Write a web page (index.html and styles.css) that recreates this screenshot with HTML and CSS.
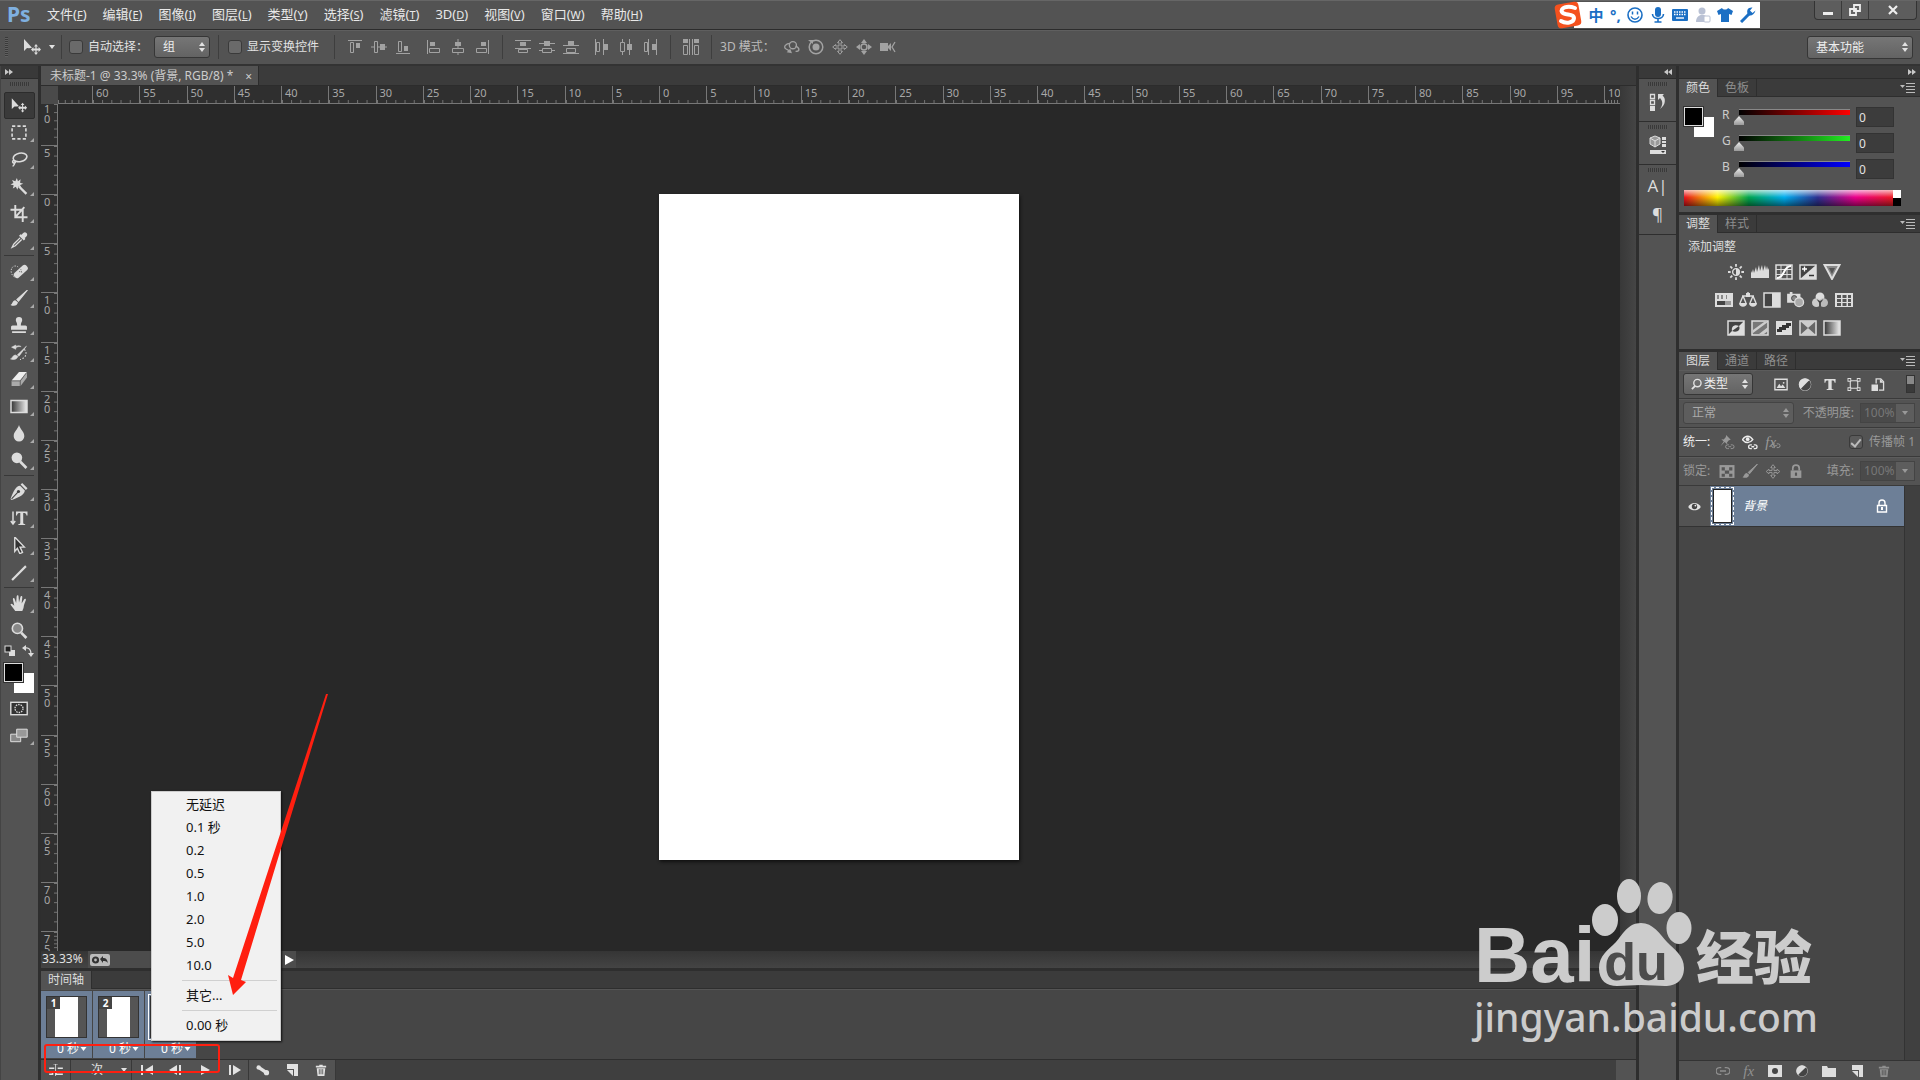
FILE: index.html
```html
<!DOCTYPE html>
<html lang="zh-CN">
<head>
    <meta charset="UTF-8">
    <meta name="viewport" content="width=device-width, initial-scale=1.0">
    <title>未标题-1 @ 33.3%</title>
    <link rel="stylesheet" href="styles.css">
</head>
<body>
    <svg class="sprite" aria-hidden="true">
        <!-- tools -->
        <symbol id="i-move" viewBox="0 0 20 16"><path d="M2 0v12l3-3 2 .2 3-.4z" fill="currentColor"/><path d="M14 5l2 2.400h-1.400v2h2V8L19 10.500l-2.400 2.400v-1.400h-2v2H16l-2 2.400-2-2.400h1.400v-2h-2v1.400L9 10.500 11.400 8v1.400h2v-2H12z" fill="currentColor"/></symbol>
        <symbol id="i-marquee" viewBox="0 0 16 16"><rect x="1.500" y="2" width="13" height="12" fill="none" stroke="currentColor" stroke-width="1.500" stroke-dasharray="3 2"/></symbol>
        <symbol id="i-lasso" viewBox="0 0 16 16"><g fill="none" stroke="currentColor" stroke-width="1.500"><ellipse cx="9" cy="6" rx="6.500" ry="4" transform="rotate(-12 9 6)"/><path d="M3.500 8.500c-2 .5-2 3 0 2.800s1-2.800-.5-1.800M4 11c-.3 2-1 3-2 3.500"/></g></symbol>
        <symbol id="i-wand" viewBox="0 0 16 16"><path d="M6 0l1 3 2.500-1.800L9 4.500l3 .8-3 1.400 1.300 2.600L7.500 8 6.500 11 5 8.200 2.200 9.800 3 6.800 0 6l2.800-1.400L1.500 1.800 4.600 3z" fill="currentColor"/><path d="M8 8l7 7" stroke="currentColor" stroke-width="2.200"/></symbol>
        <symbol id="i-crop" viewBox="0 0 16 16"><path d="M4.500 0v11.500H13M0 4.500h11.500V16M13 11.500h3M5 11l8-9" fill="none" stroke="currentColor" stroke-width="1.800"/></symbol>
        <symbol id="i-dropper" viewBox="0 0 16 16"><path d="M15 1c1.500 1.500.5 3-1.500 4.500l.5 1-1.500 1.500L8 3.500 9.500 2l1 .5C12 .5 13.500-.5 15 1z" fill="currentColor"/><path d="M9 5.500L3 11.500l-1.500 3L4.500 13l6-6" fill="none" stroke="currentColor" stroke-width="1.200"/></symbol>
        <symbol id="i-heal" viewBox="0 0 20 16"><rect x="3" y="4.500" width="18" height="7" rx="3" fill="currentColor" transform="rotate(-42 12 8)"/><path d="M10 8l4 1M12 5.500l1 4" stroke="#666" stroke-dasharray="1 1"/><path d="M5 14C1 12 0 6 3 3c2-2 5-1 6 0" fill="none" stroke="currentColor" stroke-dasharray="1.500 1.500"/></symbol>
        <symbol id="i-brush" viewBox="0 0 16 16"><path d="M16 0L7.500 10.500 6 9z" fill="currentColor" stroke="currentColor"/><path d="M7 11.500C6.500 15 3 15.500 0 14c2-.5 1.500-4 4.500-4.300z" fill="currentColor"/></symbol>
        <symbol id="i-stamp" viewBox="0 0 16 16"><path d="M8 0a3 3 0 013 3c0 1.500-1.300 2-1.300 5H14c1 0 1.500.7 1.500 1.500V12H.5V9.500C.5 8.700 1 8 2 8h4.300c0-3-1.300-3.500-1.300-5a3 3 0 013-3zM1.500 13.500h13V15h-13z" fill="currentColor"/></symbol>
        <symbol id="i-history" viewBox="0 0 16 16"><path d="M15 2L8 11.500l-1.500-1.300zM7 11.500C6 15 3 15 0 14c2-.5 1.500-3 4.500-3.700zM1 3l4-2v1.300c2-1 4-.8 5 .2-2-.3-3.500 0-5 1V5z" fill="currentColor" stroke="currentColor" stroke-width=".5"/><path d="M13 5c3 3 2 8-4 9.500" fill="none" stroke="currentColor" stroke-dasharray="1.500 1.500"/></symbol>
        <symbol id="i-eraser" viewBox="0 0 16 16"><path d="M8 1h7.500L9 9H1z" fill="#eee"/><path d="M1 9.500h8V14H1zM9.500 9.500l6-8V6l-6 8z" fill="#aaa"/><path d="M1 9.500h8l6-8M9 9.500V14" fill="none" stroke="#666" stroke-width=".6"/></symbol>
        <symbol id="i-gradient" viewBox="0 0 18 14"><defs><linearGradient id="gr"><stop stop-color="#333"/><stop offset="1" stop-color="#eee"/></linearGradient></defs><rect x="1" y="1" width="16" height="12" fill="url(#gr)" stroke="#ddd" stroke-width="1.500"/></symbol>
        <symbol id="i-drop" viewBox="0 0 16 16"><path d="M8 0c1 4 5 6 5 10.500a5 5 0 01-10 0C3 6 7 4 8 0z" fill="currentColor"/></symbol>
        <symbol id="i-dodge" viewBox="0 0 16 16"><circle cx="6" cy="5.500" r="5" fill="currentColor"/><path d="M9 9l6 6" stroke="currentColor" stroke-width="2.500"/></symbol>
        <symbol id="i-pen" viewBox="0 0 16 16"><path d="M11 0l5 5-1.500 1.500-5-5zM9 2.500L13.500 7C13 11 9 13 1 16L0 15C3 7 5 3 9 2.500z" fill="currentColor"/><path d="M1 15l6-6.500" stroke="#444"/><circle cx="7.500" cy="8" r="1.500" fill="#444"/></symbol>
        <symbol id="i-vtype" viewBox="0 0 18 16"><path d="M3 1v12M.8 10.500L3 13.500l2.200-3" fill="none" stroke="currentColor" stroke-width="1.500"/><path d="M6 1h11.500v4h-1c-.3-2-1-2.500-3.300-2.500V12c0 1.300.4 1.500 2 1.700v.8H8.300v-.8c1.600-.2 2-.4 2-1.700V2.500C8 2.500 7.300 3 7 5H6z" fill="currentColor"/></symbol>
        <symbol id="i-arrow" viewBox="0 0 16 16"><path d="M4 0l9 9.500H9l2.300 5-2.500 1.200-2.300-5L4 13.500z" fill="#333" stroke="currentColor" stroke-width="1.300"/></symbol>
        <symbol id="i-line" viewBox="0 0 16 16"><path d="M1.500 15L14.500 2" stroke="currentColor" stroke-width="2"/></symbol>
        <symbol id="i-hand" viewBox="0 0 18 18"><path d="M5 17c-1-2-4-5-5-7 .5-1.500 2-1 4 1.500L2.500 4.500c0-1.600 1.700-1.600 2 0L6 8.500 6.500 1.500c.2-1.500 2-1.500 2 0L9 8l1.500-6c.4-1.500 2.200-1.100 2 .5L11.800 9l2.700-4.500c.8-1.200 2.300-.4 1.700 1-1 2.500-2 5-2.200 7-.2 2-1 3-1.500 4.500z" fill="currentColor"/></symbol>
        <symbol id="i-zoom" viewBox="0 0 16 16"><circle cx="6.500" cy="6" r="4.800" fill="#888" stroke="currentColor" stroke-width="1.500"/><path d="M10 10l5 5" stroke="currentColor" stroke-width="2.500"/></symbol>
        <symbol id="i-default" viewBox="0 0 12 12"><rect x="5" y="5" width="6" height="6" fill="#ddd"/><rect x="1" y="1" width="6" height="6" fill="#222" stroke="#ddd"/></symbol>
        <symbol id="i-swap" viewBox="0 0 12 12"><path d="M3 3c4-1 6 2 6 6" fill="none" stroke="currentColor" stroke-width="1.300"/><path d="M0 3l4-3v6zM6 8h6l-3 4z" fill="currentColor"/></symbol>
        <symbol id="i-mask" viewBox="0 0 18 14"><rect x=".8" y=".8" width="16.400" height="12.400" fill="#333" stroke="currentColor" stroke-width="1.400"/><circle cx="9" cy="7" r="4" fill="none" stroke="currentColor" stroke-width="1.300" stroke-dasharray="1.500 1"/></symbol>
        <symbol id="i-screen" viewBox="0 0 18 14"><path d="M.7 5.700h10v7.500H.7z" fill="#888" stroke="#ddd"/><path d="M6.700.7h10.500v8H6.700z" fill="#999" stroke="#ddd"/></symbol>
        <!-- align and distribute -->
        <symbol id="i-al-t" viewBox="0 0 16 16"><path d="M1 1.500h14M3.500 3.500h3v10h-3z" fill="none" stroke="currentColor"/><path d="M9 4h4v5H9z" fill="currentColor"/></symbol>
        <symbol id="i-al-m" viewBox="0 0 16 16"><path d="M0 8h3M7 8h3M14 8h2M3.500 2.500h3v11h-3z" fill="none" stroke="currentColor"/><path d="M9 5h5v6H9z" fill="currentColor"/></symbol>
        <symbol id="i-al-b" viewBox="0 0 16 16"><path d="M1 14.500h14M3.500 2.500h3v10h-3z" fill="none" stroke="currentColor"/><path d="M9 7h4v5H9z" fill="currentColor"/></symbol>
        <symbol id="i-al-l" viewBox="0 0 16 16"><path d="M1.500 1v14M3.500 9.500h10v4h-10z" fill="none" stroke="currentColor"/><path d="M4 3h5v4H4z" fill="currentColor"/></symbol>
        <symbol id="i-al-c" viewBox="0 0 16 16"><path d="M8 0v3M8 7v2M8 13v3M2.500 9.500h11v4h-11z" fill="none" stroke="currentColor"/><path d="M5 3h6v4H5z" fill="currentColor"/></symbol>
        <symbol id="i-al-r" viewBox="0 0 16 16"><path d="M14.500 1v14M2.500 9.500h10v4h-10z" fill="none" stroke="currentColor"/><path d="M7 3h5v4H7z" fill="currentColor"/></symbol>
        <symbol id="i-ds-t" viewBox="0 0 16 16"><path d="M0 1.500h16M0 9.500h16M3.500 10.500h9v3h-9z" fill="none" stroke="currentColor"/><path d="M5 3h6v4H5z" fill="currentColor"/></symbol>
        <symbol id="i-ds-m" viewBox="0 0 16 16"><path d="M0 4.500h16M0 11.500h3M13 11.500h3M3.500 9.500h9v4h-9z" fill="none" stroke="currentColor"/><path d="M5 2h6v5H5z" fill="currentColor"/></symbol>
        <symbol id="i-ds-b" viewBox="0 0 16 16"><path d="M0 6.500h16M0 14.500h16M3.500 9.500h9v4h-9z" fill="none" stroke="currentColor"/><path d="M5 2h6v4H5z" fill="currentColor"/></symbol>
        <symbol id="i-ds-l" viewBox="0 0 16 16"><path d="M1.500 0v16M9.500 0v16M2.500 3.500h3v9h-3z" fill="none" stroke="currentColor"/><path d="M10 5h4v6h-4z" fill="currentColor"/></symbol>
        <symbol id="i-ds-c" viewBox="0 0 16 16"><path d="M4.500 0v3M4.500 13v3M11.500 0v16M2.500 3.500h4v9h-4z" fill="none" stroke="currentColor"/><path d="M9 5h5v6H9z" fill="currentColor"/></symbol>
        <symbol id="i-ds-r" viewBox="0 0 16 16"><path d="M6.500 0v16M14.500 0v16M2.500 3.500h3v9h-3z" fill="none" stroke="currentColor"/><path d="M10 5h4v6h-4z" fill="currentColor"/></symbol>
        <symbol id="i-gap" viewBox="0 0 16 16"><path d="M0 0h5v4H0zM11 0h5v4h-5z" fill="currentColor"/><path d="M6.500 0v16M9.500 0v16M.5 6.500h4v9h-4zM11.500 6.500h4v9h-4z" fill="none" stroke="currentColor"/></symbol>
        <!-- 3d modes -->
        <symbol id="i-3d-orbit" viewBox="0 0 18 16"><circle cx="10" cy="6" r="4" fill="none" stroke="currentColor" stroke-width="1.500"/><path d="M7 4C2 4-1 8 2 10l5 3M13 7c5 2 5 6 0 6" fill="none" stroke="currentColor" stroke-width="1.500"/><path d="M3 14l6 1-2-5z" fill="currentColor"/></symbol>
        <symbol id="i-3d-roll" viewBox="0 0 16 16"><circle cx="8" cy="8" r="3.500" fill="currentColor"/><circle cx="8" cy="8" r="6.800" fill="none" stroke="currentColor" stroke-width="1.500"/><path d="M0 1h5v4z" fill="currentColor"/></symbol>
        <symbol id="i-3d-pan" viewBox="0 0 16 16"><path d="M8 .7l2.500 3H9V7h3.300V5.500l3 2.500-3 2.500V9H9v3.300h1.500l-2.500 3-2.500-3H7V9H3.700v1.500L.7 8l3-2.500V7H7V3.700H5.500z" fill="none" stroke="currentColor"/></symbol>
        <symbol id="i-3d-slide" viewBox="0 0 16 16"><circle cx="8" cy="8" r="3" fill="none" stroke="currentColor" stroke-width="1.500"/><path d="M5 4l3-4 3 4zM5 12l3 4 3-4zM4 5L0 8l4 3zM12 5l4 3-4 3z" fill="currentColor"/></symbol>
        <symbol id="i-3d-cam" viewBox="0 0 16 16"><path d="M0 4h8v3l3-3v8L8 9v3H0z" fill="currentColor"/><path d="M15 3l-3 5 3 5" fill="none" stroke="currentColor" stroke-width="1.300"/></symbol>
        <!-- dock -->
        <symbol id="i-dock-hist" viewBox="0 0 18 20"><path d="M1.500 2.500h4v4h-4zM1.500 8.500h4v4h-4z" fill="none" stroke="currentColor" stroke-width="1.300"/><path d="M1 14h5v5H1z" fill="currentColor"/><path d="M9 2h6l-1.500 1.500C17 6 17 13 11 17c3-4 3-8 0-11L9 8z" fill="currentColor"/></symbol>
        <symbol id="i-dock-prop" viewBox="0 0 18 20"><path d="M6 1l5 2v6l-5 3-5-3V3z" fill="#999" stroke="currentColor"/><path d="M1 3l5 3 5-3M6 6v6" fill="none" stroke="currentColor"/><path d="M13 2h4v3h-4zM13 6h4v2h-4zM13 9h4v3h-4zM1 15h16v4H1z" fill="currentColor"/><path d="M12 16h4l-2 2z" fill="#333"/></symbol>
        <symbol id="i-menu" viewBox="0 0 16 12"><path d="M0 3h5L2.500 6z" fill="currentColor"/><path d="M6 1.500h9M6 4.500h9M6 7.500h9M6 10.500h9" stroke="currentColor"/></symbol>
        <symbol id="i-updown" viewBox="0 0 6 10"><path d="M0 4l3-4 3 4zM0 6h6l-3 4z" fill="currentColor"/></symbol>
        <symbol id="i-down" viewBox="0 0 6 4"><path d="M0 0h6L3 4z" fill="currentColor"/></symbol>
        <symbol id="i-dbl-r" viewBox="0 0 8 6"><path d="M0 0l4 3-4 3zM4 0l4 3-4 3z" fill="currentColor"/></symbol>
        <symbol id="i-dbl-l" viewBox="0 0 8 6"><path d="M4 0L0 3l4 3zM8 0L4 3l4 3z" fill="currentColor"/></symbol>
        <!-- adjustments -->
        <symbol id="i-sun" viewBox="0 0 18 18"><circle cx="9" cy="9" r="3.800" fill="none" stroke="currentColor" stroke-width="1.500"/><path d="M9 5v8a4 4 0 000-8z" fill="currentColor"/><path d="M9 0v3M9 15v3M0 9h3M15 9h3M2.600 2.600l2.200 2.200M13.200 13.200l2.200 2.200M2.600 15.400l2.200-2.200M13.200 4.800l2.200-2.200" stroke="currentColor" stroke-width="2"/></symbol>
        <symbol id="i-levels" viewBox="0 0 18 16"><path d="M0 14V7l1 2 1-4 1 4 2-6 1 5 2-7 1 6 2-6 1 6 2-6 1 5 1-4 1 4 1-2v10z" fill="currentColor"/></symbol>
        <symbol id="i-curves" viewBox="0 0 18 16"><path d="M1 1h16v14H1z" fill="#555" stroke="currentColor" stroke-width="1.500"/><path d="M1 5.500h16M1 10.500h16M6 1v14M12 1v14" stroke="currentColor"/><path d="M2 14c8 0 6-12 14-12" fill="none" stroke="#fff" stroke-width="2"/></symbol>
        <symbol id="i-exposure" viewBox="0 0 18 16"><path d="M1 1h16v14H1z" fill="#444" stroke="currentColor" stroke-width="1.500"/><path d="M17 1v14H1z" fill="currentColor"/><path d="M3 5h5M5.500 2.500v5" stroke="#fff" stroke-width="1.300"/><path d="M10 11.500h5" stroke="#333" stroke-width="1.500"/></symbol>
        <symbol id="i-vibrance" viewBox="0 0 18 16"><path d="M1.500 1h15L9 15z" fill="#888" stroke="currentColor" stroke-width="2"/><path d="M6 4h6L9 10z" fill="#555"/></symbol>
        <symbol id="i-hue" viewBox="0 0 18 16"><path d="M0 1h18v14H0z" fill="currentColor"/><path d="M2 3h2v4H2zM6 3h2v4H6zM11 3h1v4h-1z" fill="#888"/><path d="M2 9h8v4H2z" fill="#444"/><path d="M10 9h6v4h-6z" fill="#999"/></symbol>
        <symbol id="i-scale" viewBox="0 0 18 16"><path d="M9 0v4M3 4h12M4 4L1 11M4 4l3 7M14 4l-3 7M14 4l3 7" fill="none" stroke="currentColor" stroke-width="1.400"/><path d="M0 11h8c0 5-8 5-8 0zM10 11h8c0 5-8 5-8 0zM7 1h4v4H7z" fill="currentColor"/></symbol>
        <symbol id="i-bw" viewBox="0 0 18 16"><path d="M1 1h16v14H1z" fill="#444" stroke="currentColor" stroke-width="1.500"/><path d="M9 1h8v14H9z" fill="currentColor"/></symbol>
        <symbol id="i-photo" viewBox="0 0 20 18"><path d="M0 2h3V0h3v2h9v10H0z" fill="currentColor"/><circle cx="8" cy="7" r="3" fill="#888" stroke="#444"/><circle cx="13.500" cy="11.500" r="5" fill="#aaa" stroke="#ddd" stroke-width="1.500"/></symbol>
        <symbol id="i-mixer" viewBox="0 0 18 18"><circle cx="9" cy="5.500" r="5" fill="#ddd"/><circle cx="5" cy="12" r="5" fill="#ccc"/><circle cx="13" cy="12" r="5" fill="#bbb"/><path d="M5 8l4 2 4-2-3 4v4H8v-4z" fill="#444"/></symbol>
        <symbol id="i-lookup" viewBox="0 0 18 16"><path d="M0 1h18v14H0z" fill="currentColor"/><path d="M2 3h4v3H2zM7.500 3h4v3h-4zM13 3h3v3h-3zM2 7h4v3H2zM7.500 7h4v3h-4zM13 7h3v3h-3zM2 11h4v3H2zM7.500 11h4v3h-4zM13 11h3v3h-3z" fill="#555"/></symbol>
        <symbol id="i-invert" viewBox="0 0 18 16"><path d="M1 1h16v14H1z" fill="#444" stroke="currentColor" stroke-width="1.500"/><path d="M17 1v14H1l4-4c-1-5 3-7 7-5z" fill="currentColor"/><path d="M12 6c2 4-2 7-7 5z" fill="#444"/></symbol>
        <symbol id="i-poster" viewBox="0 0 18 16"><path d="M1 1h16v14H1z" fill="#777" stroke="currentColor" stroke-width="1.500"/><path d="M2 10L13 2h4L2 13zM8 14l9-7v4l-4 3z" fill="#ccc"/></symbol>
        <symbol id="i-thresh" viewBox="0 0 18 16"><path d="M1 1h16v14H1z" fill="currentColor"/><path d="M2 9h2V7h3V5h4V3h5v3h-2v2h-3v2H7v2H2z" fill="#333"/></symbol>
        <symbol id="i-selective" viewBox="0 0 18 16"><path d="M1 1h16v14H1z" fill="#666" stroke="currentColor" stroke-width="1.500"/><path d="M1 1h16L9 8zM1 15h16L9 8z" fill="#ccc"/></symbol>
        <symbol id="i-gmap" viewBox="0 0 18 16"><path d="M1 1h16v14H1z" fill="url(#gr)" stroke="currentColor" stroke-width="1.500"/></symbol>
        <!-- layers -->
        <symbol id="i-search" viewBox="0 0 12 12"><circle cx="7" cy="5" r="4" fill="none" stroke="currentColor" stroke-width="1.500"/><path d="M4.500 8L1 11.500" stroke="currentColor" stroke-width="2"/></symbol>
        <symbol id="i-image" viewBox="0 0 16 14"><path d="M1 1h14v12H1z" fill="none" stroke="currentColor" stroke-width="1.500"/><path d="M3 11l3-5 2 3 2-2 3 4z" fill="currentColor"/><circle cx="11" cy="5" r="1" fill="currentColor"/></symbol>
        <symbol id="i-adjust" viewBox="0 0 14 14"><circle cx="7" cy="7" r="6" fill="#555" stroke="currentColor" stroke-width="1.500"/><path d="M11.500 2.500a6.300 6.300 0 01-9 9z" fill="#444"/><path d="M11.500 2.500a6.300 6.300 0 00-9 9z" fill="currentColor"/></symbol>
        <symbol id="i-type" viewBox="0 0 14 14"><path d="M1 1h12v4h-1c-.3-2-1-2.300-3.200-2.300V11c0 1 .5 1.200 2 1.300v.7H3.200v-.7c1.500-.1 2-.3 2-1.300V2.700C3 2.700 2.300 3 2 5H1z" fill="currentColor"/></symbol>
        <symbol id="i-shape" viewBox="0 0 14 14"><path d="M3 3h8v8H3z" fill="none" stroke="currentColor" stroke-width="1.200"/><path d="M0 0h4v4H0zM10 0h4v4h-4zM0 10h4v4H0zM10 10h4v4h-4z" fill="currentColor"/><path d="M1 1h2v2H1zM11 1h2v2h-2zM1 11h2v2H1zM11 11h2v2h-2z" fill="#555"/></symbol>
        <symbol id="i-smart" viewBox="0 0 14 14"><path d="M5 6V1h5l3 3v9H8" fill="none" stroke="currentColor" stroke-width="1.400"/><path d="M0 7h7v7H0zM9 1v4h4z" fill="currentColor"/></symbol>
        <symbol id="i-pin" viewBox="0 0 16 16"><path d="M7 0l5 5-2 .5-2 2.500.5 2-3-2.500L1 12l3.500-5L2 4.500l2.500.3L6.800 2z" fill="currentColor"/><path d="M10 10.500H8.500a2 2 0 000 4H10M12 10.500h1.500a2 2 0 010 4H12M9.500 12.500h3" fill="none" stroke="currentColor"/></symbol>
        <symbol id="i-eyelink" viewBox="0 0 16 16"><path d="M0 5c3-5 8-5 11 0-3 4-8 4-11 0z" fill="none" stroke="currentColor" stroke-width="1.500"/><circle cx="5.500" cy="4.500" r="2" fill="currentColor"/><path d="M10 10.500H8.500a2 2 0 000 4H10M12 10.500h1.500a2 2 0 010 4H12M9.500 12.500h3" fill="none" stroke="currentColor" stroke-width="1.400"/></symbol>
        <symbol id="i-fxlink" viewBox="0 0 16 16"><path d="M10 10.500H8.500a2 2 0 000 4H10M12 10.500h1.500a2 2 0 010 4H12M9.500 12.500h3" fill="none" stroke="currentColor"/></symbol>
        <symbol id="i-link" viewBox="0 0 16 14"><path d="M6 3H4a4 4 0 000 8h2M10 3h2a4 4 0 010 8h-2M4.500 7h7" fill="none" stroke="currentColor" stroke-width="1.500"/></symbol>
        <symbol id="i-check" viewBox="0 0 14 14"><path d="M0 1h14v12H0z" fill="currentColor"/><path d="M2 3h3v3H2zM9 3h3v3H9zM5 6h4v3H5zM2 9h3v3H2zM9 9h3v3H9z" fill="#555"/></symbol>
        <symbol id="i-padlock" viewBox="0 0 12 14"><path d="M3 6V4a3 3 0 016 0v2" fill="none" stroke="currentColor" stroke-width="1.600"/><path d="M1 6h10v7H1z" fill="currentColor"/><path d="M5 8h2v3H5z" fill="#555"/></symbol>
        <symbol id="i-padlock-o" viewBox="0 0 12 14"><path d="M3 6V4a3 3 0 016 0v2M1.500 6.500h9v6.500h-9z" fill="none" stroke="currentColor" stroke-width="1.400"/><path d="M5 8h2v3H5z" fill="currentColor"/></symbol>
        <symbol id="i-eye" viewBox="0 0 14 10"><path d="M0 5.500C3-.5 11-.5 14 5.500 11 10.500 3 10.500 0 5.500z" fill="currentColor"/><circle cx="7" cy="5" r="3" fill="#444"/><circle cx="8" cy="4" r="1" fill="#eee"/></symbol>
        <symbol id="i-addmask" viewBox="0 0 14 12"><path d="M0 0h14v12H0z" fill="currentColor"/><circle cx="7" cy="6" r="3" fill="#444"/></symbol>
        <symbol id="i-folder" viewBox="0 0 14 12"><path d="M0 1h5l1 2h8v9H0z" fill="currentColor"/></symbol>
        <symbol id="i-new" viewBox="0 0 12 12"><path d="M1 0h11v12H8V5H1z" fill="currentColor"/><path d="M1 6h6v6z" fill="currentColor"/></symbol>
        <symbol id="i-trash" viewBox="0 0 12 14"><path d="M4 1h4v1h4v2H0V2h4zM1 5h10l-1 9H2z" fill="currentColor"/><path d="M4 6v6M6 6v6M8 6v6" stroke="#555"/></symbol>
        <!-- timeline -->
        <symbol id="i-convert" viewBox="0 0 16 14"><path d="M0 5h6M10 5h6M0 9h4v3H0M16 9H8v3h8" fill="none" stroke="currentColor" stroke-width="1.800"/><path d="M5 0h5M7.500 0v14" stroke="currentColor"/></symbol>
        <symbol id="i-first" viewBox="0 0 14 12"><path d="M2 1v10" stroke="currentColor" stroke-width="2"/><path d="M13 1v10L5 6z" fill="currentColor"/></symbol>
        <symbol id="i-prev" viewBox="0 0 14 12"><path d="M8 1v10L0 6z" fill="currentColor"/><path d="M11 1v10" stroke="currentColor" stroke-width="2"/></symbol>
        <symbol id="i-play" viewBox="0 0 12 12"><path d="M2 1v10l9-5z" fill="currentColor"/></symbol>
        <symbol id="i-next" viewBox="0 0 14 12"><path d="M6 1v10l8-5z" fill="currentColor"/><path d="M3 1v10" stroke="currentColor" stroke-width="2"/></symbol>
        <symbol id="i-tween" viewBox="0 0 16 12"><circle cx="3" cy="3" r="2.500" fill="currentColor"/><path d="M3 3l9 6" stroke="currentColor" stroke-width="4"/><circle cx="12" cy="9" r="3" fill="currentColor"/></symbol>
        <symbol id="i-sync" viewBox="0 0 20 12"><rect width="20" height="12" rx="2" fill="#bbb"/><circle cx="5.500" cy="6" r="2.500" fill="none" stroke="#333" stroke-width="2.200"/><path d="M10 5l3-3v2c3 0 4 1 5 5-2-2-3-2-5-2v2z" fill="#333"/></symbol>
        <!-- input method bar -->
        <symbol id="i-smile" viewBox="0 0 16 16"><circle cx="8" cy="8" r="7" fill="none" stroke="currentColor" stroke-width="1.600"/><path d="M5.500 4.500v3M10.500 4.500v3M4 9.500c2 3.500 6 3.500 8 0" fill="none" stroke="currentColor" stroke-width="1.500"/></symbol>
        <symbol id="i-mic" viewBox="0 0 16 16"><rect x="5" y="0" width="6" height="10" rx="3" fill="currentColor"/><path d="M2.500 7c0 6 11 6 11 0M8 12v3M4.500 15h7" fill="none" stroke="currentColor" stroke-width="1.600"/></symbol>
        <symbol id="i-keys" viewBox="0 0 16 12"><rect width="16" height="12" rx="1" fill="currentColor"/><path d="M2 3h12M2 5.500h12" stroke="#fff" stroke-width="1.400" stroke-dasharray="1.500 1"/><path d="M4 9h8" stroke="#fff" stroke-width="1.400"/></symbol>
        <symbol id="i-user" viewBox="0 0 16 16"><circle cx="7" cy="4" r="3.500" fill="currentColor"/><path d="M1 15c0-9 11-9 11-3v3z" fill="currentColor"/><rect x="9" y="9" width="6" height="6" rx="1" fill="#fff" stroke="currentColor"/></symbol>
        <symbol id="i-shirt" viewBox="0 0 16 16"><path d="M5 1c1 2 5 2 6 0l5 3-1.500 4L12 7v8H4V7L1.500 8 0 4z" fill="currentColor"/></symbol>
        <symbol id="i-wrench" viewBox="0 0 16 16"><path d="M1 15L10 6" stroke="currentColor" stroke-width="3"/><path d="M15.500 3.500L12.500 6 10 3.500 12.500.5C8 0 6.500 3 7.500 6.500S14 9 15.500 3.500z" fill="currentColor"/></symbol>
    </svg>

    <header class="menubar">
        <span class="logo">Ps</span>
        <nav class="menus">
            <a href="#">文件(<u>F</u>)</a>
            <a href="#">编辑(<u>E</u>)</a>
            <a href="#">图像(<u>I</u>)</a>
            <a href="#">图层(<u>L</u>)</a>
            <a href="#">类型(<u>Y</u>)</a>
            <a href="#">选择(<u>S</u>)</a>
            <a href="#">滤镜(<u>T</u>)</a>
            <a href="#">3D(<u>D</u>)</a>
            <a href="#">视图(<u>V</u>)</a>
            <a href="#">窗口(<u>W</u>)</a>
            <a href="#">帮助(<u>H</u>)</a>
        </nav>
        <div class="ime">
            <svg class="ime-logo" viewBox="0 0 28 28"><rect x="2" y="2" width="24" height="24" rx="4" fill="#f4511e" transform="rotate(-10 14 14)"/><path d="M21 7C13 4 6 7 8 11s12 1 12 6-8 6-13 3" fill="none" stroke="#fff" stroke-width="4" stroke-linecap="round"/></svg>
            <span class="ime-lang">中</span>
            <span class="ime-punct">°,</span>
            <svg class="ic16"><use href="#i-smile"/></svg>
            <svg class="ic16"><use href="#i-mic"/></svg>
            <svg class="ic16"><use href="#i-keys"/></svg>
            <svg class="ic16 pale"><use href="#i-user"/></svg>
            <svg class="ic16"><use href="#i-shirt"/></svg>
            <svg class="ic16"><use href="#i-wrench"/></svg>
        </div>
        <div class="winbtns">
            <button type="button" aria-label="最小化"><svg viewBox="0 0 12 12"><path d="M1 8h10v3H1z" fill="#eee"/></svg></button>
            <button type="button" aria-label="还原"><svg viewBox="0 0 12 12"><path d="M5 1h6v6H5zM1 5h6v6H1z" fill="#666" stroke="#eee" stroke-width="1.800"/></svg></button>
            <button type="button" class="wide" aria-label="关闭"><svg viewBox="0 0 12 12"><path d="M2 2l8 8M10 2l-8 8" stroke="#eee" stroke-width="2.200"/></svg></button>
        </div>
    </header>

    <div class="options">
        <span class="grip-v"></span>
        <svg class="ic-move"><use href="#i-move"/></svg>
        <svg class="ic-caret"><use href="#i-down"/></svg>
        <span class="sep"></span>
        <label class="check"><input type="checkbox">自动选择：</label>
        <span class="drop drop-group"><select aria-label="选择对象"><option>组</option><option>图层</option></select><svg><use href="#i-updown"/></svg></span>
        <span class="sep"></span>
        <label class="check wide-check"><input type="checkbox">显示变换控件</label>
        <span class="sep tight"></span>
        <div class="icons"><svg><use href="#i-al-t"/></svg><svg><use href="#i-al-m"/></svg><svg><use href="#i-al-b"/></svg></div>
        <div class="icons"><svg><use href="#i-al-l"/></svg><svg><use href="#i-al-c"/></svg><svg><use href="#i-al-r"/></svg></div>
        <span class="sep tight"></span>
        <div class="icons"><svg><use href="#i-ds-t"/></svg><svg><use href="#i-ds-m"/></svg><svg><use href="#i-ds-b"/></svg></div>
        <div class="icons"><svg><use href="#i-ds-l"/></svg><svg><use href="#i-ds-c"/></svg><svg><use href="#i-ds-r"/></svg></div>
        <span class="sep tight"></span>
        <div class="icons"><svg><use href="#i-gap"/></svg></div>
        <span class="sep tight"></span>
        <span class="mode-label">3D 模式：</span>
        <div class="icons"><svg><use href="#i-3d-orbit"/></svg><svg><use href="#i-3d-roll"/></svg><svg><use href="#i-3d-pan"/></svg><svg><use href="#i-3d-slide"/></svg><svg><use href="#i-3d-cam"/></svg></div>
        <span class="drop drop-work"><select aria-label="工作区"><option>基本功能</option></select><svg><use href="#i-updown"/></svg></span>
    </div>

    <main class="workspace">
        <aside class="toolbox">
            <div class="strip"><svg><use href="#i-dbl-r"/></svg></div>
            <div class="grip"></div>
            <div class="tools">
                <button type="button" class="tool active" aria-label="移动"><svg><use href="#i-move"/></svg></button>
                <button type="button" class="tool more" aria-label="选框"><svg><use href="#i-marquee"/></svg></button>
                <button type="button" class="tool more" aria-label="套索"><svg><use href="#i-lasso"/></svg></button>
                <button type="button" class="tool more" aria-label="魔棒"><svg><use href="#i-wand"/></svg></button>
                <button type="button" class="tool more" aria-label="裁剪"><svg><use href="#i-crop"/></svg></button>
                <button type="button" class="tool more" aria-label="吸管"><svg><use href="#i-dropper"/></svg></button>
                <hr>
                <button type="button" class="tool more" aria-label="修复画笔"><svg><use href="#i-heal"/></svg></button>
                <button type="button" class="tool more" aria-label="画笔"><svg><use href="#i-brush"/></svg></button>
                <button type="button" class="tool more" aria-label="图章"><svg><use href="#i-stamp"/></svg></button>
                <button type="button" class="tool more" aria-label="历史画笔"><svg><use href="#i-history"/></svg></button>
                <button type="button" class="tool more" aria-label="橡皮擦"><svg><use href="#i-eraser"/></svg></button>
                <button type="button" class="tool more" aria-label="渐变"><svg><use href="#i-gradient"/></svg></button>
                <button type="button" class="tool more" aria-label="模糊"><svg><use href="#i-drop"/></svg></button>
                <button type="button" class="tool more" aria-label="减淡"><svg><use href="#i-dodge"/></svg></button>
                <hr>
                <button type="button" class="tool more" aria-label="钢笔"><svg><use href="#i-pen"/></svg></button>
                <button type="button" class="tool more" aria-label="直排文字"><svg><use href="#i-vtype"/></svg></button>
                <button type="button" class="tool more" aria-label="路径选择"><svg><use href="#i-arrow"/></svg></button>
                <button type="button" class="tool more" aria-label="直线"><svg><use href="#i-line"/></svg></button>
                <hr>
                <button type="button" class="tool more" aria-label="抓手"><svg><use href="#i-hand"/></svg></button>
                <button type="button" class="tool" aria-label="缩放"><svg><use href="#i-zoom"/></svg></button>
                <div class="mini"><svg><use href="#i-default"/></svg><svg><use href="#i-swap"/></svg></div>
                <div class="swatches"><span class="bg"></span><span class="fg"></span></div>
                <button type="button" class="tool" aria-label="快速蒙版"><svg><use href="#i-mask"/></svg></button>
                <button type="button" class="tool more" aria-label="屏幕模式"><svg><use href="#i-screen"/></svg></button>
            </div>
        </aside>

        <section class="document">
            <div class="doc-tabs"><div class="doc-tab">未标题-1 @ 33.3% (背景, RGB/8) *<button type="button" aria-label="关闭标签">×</button></div></div>
            <div class="view">
                <div class="corner"></div>
                <div class="ruler ruler-h" id="rulerH"></div>
                <div class="ruler ruler-v" id="rulerV"></div>
                <div class="canvas"><div class="artboard"></div></div>
                <div class="scroll-v"></div>
            </div>
            <div class="status">
                <span class="zoomlevel">33.33%</span>
                <div class="docinfo"><svg class="sync"><use href="#i-sync"/></svg><svg class="go"><use href="#i-play"/></svg></div>
            </div>
            <div class="timeline">
                <div class="tabs"><span class="tab on">时间轴</span><svg class="tabmenu"><use href="#i-menu"/></svg></div>
                <div class="frames">
                    <div class="frame"><div class="thumb"><b>1</b></div><button type="button">0 秒<svg><use href="#i-down"/></svg></button></div>
                    <div class="frame"><div class="thumb"><b>2</b></div><button type="button">0 秒<svg><use href="#i-down"/></svg></button></div>
                    <div class="frame current"><div class="thumb"><b>3</b></div><button type="button">0 秒<svg><use href="#i-down"/></svg></button></div>
                </div>
                <div class="playbar">
                    <div class="seg seg-a"><svg><use href="#i-convert"/></svg></div>
                    <div class="seg seg-b"><span>次</span><svg class="ic-caret"><use href="#i-down"/></svg></div>
                    <div class="seg seg-c"><svg><use href="#i-first"/></svg><svg><use href="#i-prev"/></svg><svg><use href="#i-play"/></svg><svg><use href="#i-next"/></svg></div>
                    <div class="seg seg-d"><svg><use href="#i-tween"/></svg><svg><use href="#i-new"/></svg><svg><use href="#i-trash"/></svg></div>
                    <div class="endcap"></div>
                </div>
            </div>
        </section>

        <aside class="dock">
            <div class="strip"><svg><use href="#i-dbl-l"/></svg></div>
            <div class="dock-group"><div class="grip"></div><svg><use href="#i-dock-hist"/></svg></div>
            <div class="dock-group"><div class="grip"></div><svg><use href="#i-dock-prop"/></svg></div>
            <div class="dock-group tall"><div class="grip"></div><span class="char">A|</span><span class="para">¶</span></div>
            <div class="dock-rest"></div>
        </aside>

        <aside class="panels">
            <div class="strip"><svg><use href="#i-dbl-r"/></svg></div>
            <section class="panel">
                <div class="tabs"><span class="tab on">颜色</span><span class="tab">色板</span><svg class="tabmenu"><use href="#i-menu"/></svg></div>
                <div class="color-body">
                    <div class="swatches"><span class="bg"></span><span class="fg"></span></div>
                    <div class="channels">
                        <div class="channel red"><label for="chR">R</label><input type="range" id="chR" min="0" max="255" value="0"><input type="text" value="0" aria-label="R 值"></div>
                        <div class="channel green"><label for="chG">G</label><input type="range" id="chG" min="0" max="255" value="0"><input type="text" value="0" aria-label="G 值"></div>
                        <div class="channel blue"><label for="chB">B</label><input type="range" id="chB" min="0" max="255" value="0"><input type="text" value="0" aria-label="B 值"></div>
                    </div>
                    <div class="spectrum"><span class="ramp"></span><span class="bw"></span></div>
                </div>
            </section>
            <section class="panel">
                <div class="tabs"><span class="tab on">调整</span><span class="tab">样式</span><svg class="tabmenu"><use href="#i-menu"/></svg></div>
                <div class="adjust-body">
                    <p>添加调整</p>
                    <div class="adj"><svg><use href="#i-sun"/></svg><svg><use href="#i-levels"/></svg><svg><use href="#i-curves"/></svg><svg><use href="#i-exposure"/></svg><svg><use href="#i-vibrance"/></svg></div>
                    <div class="adj"><svg><use href="#i-hue"/></svg><svg><use href="#i-scale"/></svg><svg><use href="#i-bw"/></svg><svg><use href="#i-photo"/></svg><svg><use href="#i-mixer"/></svg><svg><use href="#i-lookup"/></svg></div>
                    <div class="adj"><svg><use href="#i-invert"/></svg><svg><use href="#i-poster"/></svg><svg><use href="#i-thresh"/></svg><svg><use href="#i-selective"/></svg><svg><use href="#i-gmap"/></svg></div>
                </div>
            </section>
            <section class="panel layers">
                <div class="tabs"><span class="tab on">图层</span><span class="tab">通道</span><span class="tab">路径</span><svg class="tabmenu"><use href="#i-menu"/></svg></div>
                <div class="lrow filter">
                    <span class="drop drop-kind"><svg class="lens"><use href="#i-search"/></svg><select aria-label="滤镜类型"><option>类型</option></select><svg><use href="#i-updown"/></svg></span>
                    <div class="kinds"><svg><use href="#i-image"/></svg><svg><use href="#i-adjust"/></svg><svg><use href="#i-type"/></svg><svg><use href="#i-shape"/></svg><svg><use href="#i-smart"/></svg></div>
                    <span class="switch"></span>
                </div>
                <div class="lrow dim">
                    <span class="drop drop-blend"><select aria-label="混合模式"><option>正常</option></select><svg><use href="#i-updown"/></svg></span>
                    <label class="push" for="opacity">不透明度:</label>
                    <span class="percent"><input type="text" id="opacity" value="100%"><button type="button" aria-label="不透明度滑块"><svg><use href="#i-down"/></svg></button></span>
                </div>
                <div class="lrow dim">
                    <span class="bright">统一:</span>
                    <div class="locks"><svg><use href="#i-pin"/></svg><svg class="bright"><use href="#i-eyelink"/></svg><span class="fx"><i>fx</i><svg><use href="#i-fxlink"/></svg></span></div>
                    <label class="check push"><input type="checkbox" checked>传播帧 1</label>
                </div>
                <div class="lrow dim">
                    <span>锁定:</span>
                    <div class="locks"><svg><use href="#i-check"/></svg><svg><use href="#i-brush"/></svg><svg><use href="#i-3d-pan"/></svg><svg><use href="#i-padlock"/></svg></div>
                    <label class="push" for="fill">填充:</label>
                    <span class="percent"><input type="text" id="fill" value="100%"><button type="button" aria-label="填充滑块"><svg><use href="#i-down"/></svg></button></span>
                </div>
                <div class="layer-list">
                    <div class="layer-items">
                        <div class="layer">
                            <div class="eye"><svg><use href="#i-eye"/></svg></div>
                            <div class="layer-main"><span class="lthumb"></span><em>背景</em><svg><use href="#i-padlock-o"/></svg></div>
                        </div>
                    </div>
                    <div class="layer-scroll"></div>
                </div>
                <div class="layer-foot">
                    <svg class="off"><use href="#i-link"/></svg><i class="off">fx</i><svg><use href="#i-addmask"/></svg><svg><use href="#i-adjust"/></svg><svg><use href="#i-folder"/></svg><svg><use href="#i-new"/></svg><svg class="off"><use href="#i-trash"/></svg>
                </div>
            </section>
        </aside>
    </main>

    <!-- delay menu opened from the third frame -->
    <ul class="popup">
        <li>无延迟</li>
        <li>0.1 秒</li>
        <li>0.2</li>
        <li>0.5</li>
        <li>1.0</li>
        <li>2.0</li>
        <li>5.0</li>
        <li>10.0</li>
        <li class="ruled">其它...</li>
        <li class="ruled">0.00 秒</li>
    </ul>
    <div class="redbox"></div>
    <svg class="redarrow" viewBox="0 0 110 304"><path d="M101 0h2L16 286l5 2L8 301 3 281l5 3z" fill="#ff1f10"/></svg>

    <div class="watermark">
        <div class="wm-top">
            <span class="wm-bai">Bai</span>
            <div class="wm-paw">
                <svg viewBox="0 0 100 110"><g fill="#ccc"><ellipse cx="13" cy="42" rx="13" ry="16"/><ellipse cx="37" cy="18" rx="12" ry="17"/><ellipse cx="68" cy="20" rx="12.500" ry="16" transform="rotate(8 68 20)"/><ellipse cx="87" cy="50" rx="12.500" ry="16"/><path d="M49 45c12 0 19 11 26 19 8 8 17 14 17 26 0 13-9 18-19 18-8 0-15-1-24-1s-16 1-24 1c-10 0-18-5-18-18 0-12 9-18 17-26 7-8 12-19 25-19z"/></g></svg>
                <span>du</span>
            </div>
            <span class="wm-cn">经验</span>
        </div>
        <div class="wm-url">jingyan.baidu.com</div>
    </div>

    <script>
        // ruler marks: part cell, then one cell for every 5 units, then part cell
        function buildRuler(id, from, to, head) {
            const ruler = document.getElementById(id);
            let html = '<span class="part">' + head + '</span>';
            for (let n = from; n < to; n += 5) {
                html += '<span>' + Math.abs(n) + '</span>';
            }
            html += '<span class="part last">' + to + '</span>';
            ruler.innerHTML = html;
        }

        buildRuler('rulerH', -60, 100, '');
        buildRuler('rulerV', -5, 75, '10');
    </script>
</body>
</html>
```
FILE: styles.css
```css
* {
    box-sizing: border-box;
}

body {
    margin: 0;
    height: 100vh;
    display: flex;
    flex-direction: column;
    overflow: hidden;
    position: relative;
    background: #2e2e2e;
    color: #e2e2e2;
    font-family: "Noto Sans", "Noto Sans CJK SC", sans-serif;
    font-size: 13px;
    line-height: 16px;
}

button, input, select {
    font: inherit;
    color: inherit;
}

button {
    border: 0;
    padding: 0;
    background: none;
}

.sprite {
    position: absolute;
    width: 0;
    height: 0;
}

.ic16 {
    width: 16px;
    height: 16px;
}

/* menu bar */
.menubar {
    height: 30px;
    display: flex;
    align-items: center;
    background: #535353;
    border-top: 1px solid #666;
    border-bottom: 1px solid #2c2c2c;
}

.logo {
    width: 47px;
    padding: 0 0 2px 7px;
    color: #7fb0e0;
    font-size: 21px;
    font-weight: bold;
}

.menus {
    display: flex;
    gap: 16px;
    flex: 1;
    padding-bottom: 2px;
}

.menus a {
    color: #e8e8e8;
    text-decoration: none;
    white-space: nowrap;
    font-size: 13px;
}

.menus u {
    font-size: 11px;
}

.ime {
    height: 26px;
    width: 206px;
    margin-right: 54px;
    padding-right: 4px;
    display: flex;
    align-items: center;
    justify-content: space-between;
    background: linear-gradient(90deg, transparent 20px, #fff 20px);
    color: #1b6fc4;
}

.ime-logo {
    width: 28px;
    height: 28px;
}

.ime-lang, .ime-punct {
    font-size: 15px;
    font-weight: bold;
}

.pale {
    color: #b9c1d4;
}

.winbtns {
    display: flex;
    align-self: flex-start;
    height: 19px;
    margin-right: 3px;
    border: 1px solid #333;
    border-top: 0;
    border-radius: 0 0 4px 4px;
    background: #5d5d5d;
}

.winbtns button {
    width: 27px;
    border-right: 1px solid #3a3a3a;
}

.winbtns .wide {
    width: 47px;
    border-right: 0;
}

.winbtns svg {
    width: 12px;
    height: 12px;
    display: block;
    margin: auto;
}

/* options bar */
.options {
    height: 36px;
    display: flex;
    align-items: center;
    background: #535353;
    border-top: 1px solid #5f5f5f;
    border-bottom: 2px solid #333;
    padding: 0 7px 1px 5px;
}

.grip-v {
    width: 3px;
    height: 20px;
    margin-right: 14px;
    background: repeating-linear-gradient(#3a3a3a 0 1px, #606060 1px 2px);
}

.ic-move {
    width: 20px;
    height: 16px;
    color: #ddd;
}

.ic-caret {
    width: 6px;
    height: 4px;
    margin: 0 6px 0 7px;
}

.sep {
    width: 1px;
    height: 24px;
    margin: 0 9px 0 8px;
    background: #3e3e3e;
}

.options .ic-caret + .sep {
    margin: 0 7px 0 0;
}

.options .tight {
    margin: 0;
}

.check {
    display: flex;
    align-items: center;
    gap: 5px;
    white-space: nowrap;
    font-size: 12px;
}

.wide-check {
    margin-right: 15px;
}

.check input {
    appearance: none;
    width: 14px;
    height: 14px;
    margin: 0;
    border: 1px solid #3a3a3a;
    border-radius: 3px;
    background: #6a6a6a;
}

.drop {
    position: relative;
    display: inline-flex;
    height: 22px;
}

.drop select {
    appearance: none;
    width: 100%;
    padding: 0 8px;
    border: 1px solid #363636;
    border-radius: 3px;
    background: linear-gradient(#767676, #636363);
    color: #eee;
    font-size: 12px;
}

.drop svg {
    position: absolute;
    right: 5px;
    top: 6px;
    width: 6px;
    height: 10px;
    pointer-events: none;
}

.drop-group {
    width: 56px;
    margin-left: 6px;
}

.drop-work {
    width: 106px;
    margin-left: auto;
}

.drop-work select {
    height: 23px;
}

.icons {
    display: flex;
    gap: 8px;
    margin: 0 12px;
    color: #a2a2a2;
}

.icons svg {
    width: 16px;
    height: 16px;
}

.icons + .icons {
    margin-left: 3px;
}

.mode-label {
    width: 52px;
    margin-left: 8px;
    color: #bbb;
    font-size: 12px;
    white-space: nowrap;
}

/* workspace */
.workspace {
    flex: 1;
    min-height: 0;
    display: grid;
    grid-template-columns: 38px minmax(0, 1fr) 37px 241px;
    gap: 3px;
    background: #2e2e2e;
}

.strip {
    height: 13px;
    flex: none;
    background: #393939;
    border-bottom: 1px solid #2c2c2c;
    display: flex;
    align-items: center;
    padding: 0 4px;
    color: #c8c8c8;
}

.strip svg {
    width: 8px;
    height: 6px;
}

.dock .strip, .panels .strip {
    justify-content: flex-end;
}

.grip {
    width: 20px;
    height: 4px;
    margin: 3px auto 0;
    background: repeating-linear-gradient(90deg, #393939 0 1px, #555 1px 2px);
}

.toolbox {
    background: #535353;
    border-left: 1px solid #444;
    color: #dcdcdc;
}

.tools {
    margin-top: 6px;
    padding-right: 1px;
    display: flex;
    flex-direction: column;
    align-items: center;
}

.tools hr {
    width: 30px;
    height: 1px;
    margin: 1px 0 2px;
    border: 0;
    background: #383838;
}

.tool {
    position: relative;
    width: 31px;
    height: 27px;
    display: flex;
    align-items: center;
    justify-content: center;
}

.tool svg {
    width: 18px;
    height: 17px;
}

.tool.active {
    background: #3a3a3a;
    border: 1px solid #2c2c2c;
    border-radius: 2px;
}

.tool.more::after {
    content: "";
    position: absolute;
    right: 1px;
    bottom: 4px;
    border-left: 4px solid transparent;
    border-bottom: 4px solid #aaa;
}

.mini {
    display: flex;
    gap: 6px;
    margin-top: 1px;
}

.mini svg {
    width: 12px;
    height: 12px;
}

.swatches {
    width: 30px;
    height: 31px;
    display: grid;
    grid-template: repeat(30, 1px) / repeat(30, 1px);
}

.swatches .fg {
    grid-area: 1 / 1 / 20 / 20;
    background: #000;
    border: 1px solid #ddd;
    outline: 1px solid #333;
}

.swatches .bg {
    grid-area: 11 / 11 / 31 / 31;
    background: #fff;
}

.tools .swatches {
    margin: 6px 0 1px;
}

/* document */
.document {
    display: flex;
    flex-direction: column;
    min-height: 0;
}

.doc-tabs {
    height: 20px;
    flex: none;
    display: flex;
    background: #3b3b3b;
    border-bottom: 1px solid #2c2c2c;
}

.doc-tab {
    width: 218px;
    padding: 2px 6px 0 9px;
    display: flex;
    justify-content: space-between;
    background: #535353;
    border-right: 1px solid #2c2c2c;
    color: #ccc;
    font-size: 12px;
    white-space: nowrap;
}

.view {
    flex: 1;
    min-height: 0;
    display: grid;
    grid-template: 18px minmax(0, 1fr) / 17px minmax(0, 1fr) 16px;
    background: #2f2f2f;
}

.corner {
    background: #4a4a4a;
}

.ruler {
    display: flex;
    overflow: hidden;
    color: #a8a8a8;
    font-size: 11px;
    line-height: 12px;
}

.ruler span {
    flex: 1 1 0;
    min-width: 0;
    min-height: 0;
    overflow: hidden;
}

.ruler-h {
    border-bottom: 1px solid #777;
}

.ruler-h span {
    padding: 1px 0 0 3px;
    border-left: 1px solid #777;
    background: linear-gradient(90deg, #777 1px, transparent 1px) left bottom / 20% 3px repeat-x;
}

.ruler-h .part {
    flex: 0 0 34px;
    border-left: 0;
}

.ruler-h .last {
    flex-basis: 16px;
    border-left: 1px solid #777;
}

.ruler-v {
    flex-direction: column;
    border-right: 1px solid #777;
}

.ruler-v span {
    padding: 2px 8px 0 3px;
    border-top: 1px solid #777;
    word-break: break-all;
    line-height: 10px;
    background: linear-gradient(#777 1px, transparent 1px) right top / 3px 20% repeat-y;
}

.ruler-v .part {
    flex: 0 0 41px;
    padding-top: 0;
    border-top: 0;
}

.ruler-v .last {
    flex-basis: 20px;
    padding-top: 2px;
    border-top: 1px solid #777;
}

.canvas {
    grid-area: 2 / 2;
    display: flex;
    align-items: center;
    justify-content: center;
    padding-bottom: 2px;
    background: #282828;
}

.artboard {
    width: 360px;
    height: 666px;
    background: #fff;
    box-shadow: 1px 2px 3px #111;
}

.scroll-v {
    grid-area: 1 / 3 / 3 / 4;
    background: linear-gradient(90deg, #383838, #454545);
}

.status {
    height: 17px;
    flex: none;
    display: flex;
    background: linear-gradient(#353535, #444);
}

.zoomlevel {
    width: 47px;
    padding-left: 1px;
    font-size: 12px;
}

.docinfo {
    width: 208px;
    padding: 0 1px 0 2px;
    display: flex;
    align-items: center;
    justify-content: space-between;
    background: #4c4c4c;
    color: #fff;
}

.sync {
    width: 20px;
    height: 12px;
}

.go {
    width: 12px;
    height: 12px;
}

/* timeline */
.timeline {
    height: 112px;
    flex: none;
    display: flex;
    flex-direction: column;
    border-top: 3px solid #2e2e2e;
    background: #464646;
}

.tabs {
    height: 18px;
    flex: none;
    display: flex;
    background: #3b3b3b;
    border-bottom: 1px solid #2e2e2e;
}

.tab {
    padding: 0 7px;
    border-right: 1px solid #2e2e2e;
    color: #8e8e8e;
    font-size: 12px;
    line-height: 17px;
}

.tab.on {
    margin-bottom: -1px;
    background: #535353;
    color: #ddd;
}

.tabmenu {
    width: 16px;
    height: 12px;
    margin: 3px 4px 0 auto;
    color: #bbb;
}

.frames {
    display: flex;
    height: 70px;
    gap: 1px;
    padding: 1px 0;
    border-top: 1px solid #555;
}

.frame {
    width: 51px;
    padding: 5px 5px 0;
    background: #6d7f97;
    display: flex;
    flex-direction: column;
}

.thumb {
    width: 41px;
    height: 44px;
    border: 1px solid #333;
    background: linear-gradient(90deg, #555 8px, #fff 8px 31px, #555 31px);
}

.current .thumb {
    outline: 1px solid #fff;
    outline-offset: 1px;
}

.thumb b {
    display: block;
    width: 13px;
    height: 12px;
    background: #444;
    font-size: 10px;
    line-height: 12px;
    text-align: center;
    color: #fff;
}

.frame button {
    display: flex;
    align-items: center;
    justify-content: flex-end;
    gap: 1px;
    margin-top: 2px;
    font-size: 12px;
    line-height: 18px;
    color: #fff;
}

.frame button svg {
    width: 7px;
    height: 4px;
}

.playbar {
    flex: 1;
    display: flex;
    background: #3f3f3f;
    border-top: 1px solid #2e2e2e;
}

.seg {
    display: flex;
    align-items: center;
    justify-content: space-around;
    background: #535353;
    border-right: 1px solid #383838;
}

.seg svg {
    width: 14px;
    height: 12px;
}

.seg .ic-caret {
    width: 6px;
    height: 4px;
    margin: 0;
}

.seg-a {
    width: 30px;
}

.seg-b {
    width: 61px;
    padding: 0 4px 0 20px;
    justify-content: space-between;
    font-size: 12px;
}

.seg-c {
    width: 117px;
}

.seg-d {
    width: 87px;
}

.endcap {
    width: 20px;
    margin-left: auto;
    background: #535353;
}

/* dock */
.dock {
    display: flex;
    flex-direction: column;
}

.dock-group {
    height: 42px;
    flex: none;
    margin-bottom: 1px;
    background: #535353;
    display: flex;
    flex-direction: column;
    align-items: center;
    color: #ddd;
}

.dock-group svg {
    width: 18px;
    height: 20px;
    margin-top: 6px;
}

.dock-group.tall {
    height: 69px;
}

.char, .para {
    font-family: "Open Sans", sans-serif;
    font-size: 17px;
    line-height: 28px;
}

.dock-group .grip {
    flex: none;
}

.dock-rest {
    flex: 1;
    background: #535353;
}

/* right panels */
.panels {
    display: flex;
    flex-direction: column;
}

.panel {
    flex: none;
    margin-bottom: 3px;
    background: #535353;
}

.color-body {
    height: 115px;
    padding: 10px 19px 0 5px;
    display: grid;
    grid-template: 83px 16px / 38px 1fr;
}

.channels {
    padding-right: 7px;
}

.channel {
    height: 26px;
    display: grid;
    grid-template-columns: 11px 1fr 38px;
    gap: 6px;
    font-size: 12px;
}

.channel label {
    color: #ccc;
}

.channel input[type="text"] {
    width: 38px;
    height: 20px;
    padding: 0 2px;
    border: 1px solid #333;
    background: #3c3c3c;
}

.channel input[type="range"] {
    appearance: none;
    width: 100%;
    height: 18px;
    margin: 2px 0 0;
    background: none;
}

.channel input[type="range"]::-webkit-slider-runnable-track {
    height: 18px;
    background: linear-gradient(90deg, #000, var(--hue)) top / 100% 5px no-repeat;
    border-top: 1px solid #888;
}

.channel input[type="range"]::-webkit-slider-thumb {
    appearance: none;
    width: 10px;
    height: 9px;
    margin: 6px 0 0 -5px;
    background: linear-gradient(#eee, #999);
    clip-path: polygon(50% 0, 100% 60%, 100% 100%, 0 100%, 0 60%);
}

.red {
    --hue: #f00;
}

.green {
    --hue: #2e2;
}

.blue {
    --hue: #00f;
}

.spectrum {
    grid-column: 1 / 3;
    display: flex;
}

.ramp {
    flex: 1;
    background:
        linear-gradient(rgba(255, 255, 255, 0.7), transparent 45%, rgba(0, 0, 0, 0.5)),
        linear-gradient(90deg, #e8101c, #fff200 16%, #00a650 31%, #00aeef 48%, #2e3192 64%, #ec008c 82%, #ed1c24);
}

.bw {
    width: 8px;
    background: linear-gradient(#fff 50%, #000 50%);
}

.adjust-body {
    height: 116px;
    padding: 6px 40px 0 9px;
    color: #ddd;
}

.adjust-body p {
    margin: 0 0 3px;
    font-size: 12px;
}

.adj {
    display: flex;
    justify-content: center;
    gap: 6px;
    height: 28px;
    align-items: center;
}

.adj svg {
    width: 18px;
    height: 16px;
}

.layers {
    flex: 1;
    min-height: 0;
    margin: 0;
    display: flex;
    flex-direction: column;
}

.lrow {
    height: 29px;
    flex: none;
    padding: 0 5px 1px 4px;
    display: flex;
    align-items: center;
    border-bottom: 1px solid #3a3a3a;
    border-top: 1px solid #5c5c5c;
    font-size: 12px;
    white-space: nowrap;
}

.drop-kind {
    width: 70px;
}

.drop-kind select {
    padding-left: 20px;
}

.drop .lens {
    left: 8px;
    top: 5px;
    width: 11px;
    height: 12px;
    z-index: 1;
}

.kinds {
    flex: 1;
    display: flex;
    justify-content: space-between;
    padding: 0 21px;
    color: #ddd;
}

.kinds svg {
    width: 14px;
    height: 13px;
}

.switch {
    width: 9px;
    height: 18px;
    border: 1px solid #333;
    background: linear-gradient(#888 50%, #3a3a3a 50%);
}

.dim {
    color: #999;
}

.dim select {
    border-color: #444;
    background: #5d5d5d;
    color: #aaa;
}

.drop-blend {
    width: 111px;
}

.push {
    margin-left: auto;
}

.percent {
    display: flex;
    width: 55px;
    height: 20px;
    margin-left: 6px;
    border: 1px solid #444;
}

.percent input {
    width: 35px;
    padding: 0 0 0 3px;
    border: 0;
    background: #4a4a4a;
    color: #777;
}

.percent button {
    flex: 1;
    background: #5d5d5d;
}

.percent svg {
    width: 6px;
    height: 4px;
    display: block;
    margin: auto;
}

.bright {
    color: #eee;
}

.locks {
    display: flex;
    align-items: center;
    gap: 7px;
    margin-left: 9px;
}

.locks svg {
    width: 16px;
    height: 15px;
}

.locks i, .layer-foot i {
    font-family: "Liberation Serif", serif;
    font-size: 15px;
}

.fx {
    display: grid;
}

.fx i, .fx svg {
    grid-area: 1 / 1;
}

.dim .check {
    gap: 6px;
}

.dim .check input {
    display: grid;
    place-items: center;
    background: #5a5a5a;
}

.dim .check input:checked::before {
    content: "";
    width: 4px;
    height: 8px;
    border: solid #bbb;
    border-width: 0 2px 2px 0;
    transform: rotate(40deg);
}

.layer-list {
    flex: 1;
    min-height: 0;
    display: flex;
    background: #464646;
}

.layer-items {
    flex: 1;
}

.layer {
    display: flex;
    height: 41px;
    border-bottom: 1px solid #333;
}

.eye {
    width: 31px;
    display: grid;
    place-items: center;
    background: #535353;
}

.eye svg {
    width: 13px;
    height: 9px;
}

.layer-main {
    flex: 1;
    padding: 0 16px 0 3px;
    display: flex;
    align-items: center;
    background: #6d7f97;
    color: #fff;
    font-size: 12px;
}

.layer-main em {
    margin: 0 auto 0 11px;
}

.layer-main svg {
    width: 12px;
    height: 14px;
}

.lthumb {
    width: 19px;
    height: 34px;
    background: #fff;
    border: 1px solid #222;
    outline: 1px dashed #fff;
    outline-offset: 1px;
}

.layer-scroll {
    width: 16px;
    border-left: 1px solid #333;
    background: #404040;
}

.layer-foot {
    height: 20px;
    flex: none;
    padding: 0 29px 0 37px;
    display: flex;
    align-items: center;
    justify-content: space-between;
    border-top: 1px solid #333;
    color: #ddd;
}

.layer-foot svg {
    width: 14px;
    height: 12px;
}

.off {
    color: #909090;
}

/* delay menu and marks over the page */
.popup {
    position: absolute;
    left: 151px;
    bottom: 39px;
    width: 130px;
    height: 250px;
    margin: 0;
    padding: 1px 3px;
    list-style: none;
    background: #f1f1f1;
    border: 1px solid #ccc;
    box-shadow: 1px 1px 2px #111;
    color: #111;
}

.popup li {
    padding-left: 31px;
    line-height: 23px;
}

.popup .ruled {
    margin-top: 3px;
    padding-top: 4px;
    background: linear-gradient(#d0d0d0, #d0d0d0) 27px 0 / 96px 1px no-repeat;
}

.redbox {
    position: absolute;
    left: 44px;
    bottom: 7px;
    width: 176px;
    height: 29px;
    border: 2px solid #ff1f10;
    border-radius: 3px;
}

.redarrow {
    position: absolute;
    left: 225px;
    bottom: 82px;
    width: 110px;
    height: 304px;
}

.watermark {
    position: absolute;
    right: 104px;
    bottom: 38px;
    width: 342px;
    color: #ccc;
    pointer-events: none;
}

.wm-top {
    display: flex;
    align-items: flex-end;
    height: 110px;
}

.wm-bai {
    width: 118px;
    font-family: "Liberation Sans", sans-serif;
    font-size: 78px;
    font-weight: bold;
    line-height: 66px;
}

.wm-paw {
    width: 100px;
    display: grid;
    align-items: end;
    justify-items: center;
}

.wm-paw svg, .wm-paw span {
    grid-area: 1 / 1;
}

.wm-paw svg {
    width: 100px;
    height: 110px;
}

.wm-paw span {
    padding-right: 12px;
    color: #4c4c4c;
    font-family: "Liberation Sans", sans-serif;
    font-size: 52px;
    font-weight: bold;
    line-height: 52px;
}

.wm-cn {
    margin-left: 4px;
    font-size: 58px;
    font-weight: 900;
    line-height: 62px;
}

.wm-url {
    padding-top: 4px;
    font-size: 39px;
    font-weight: 500;
    line-height: 50px;
    white-space: nowrap;
}
```
